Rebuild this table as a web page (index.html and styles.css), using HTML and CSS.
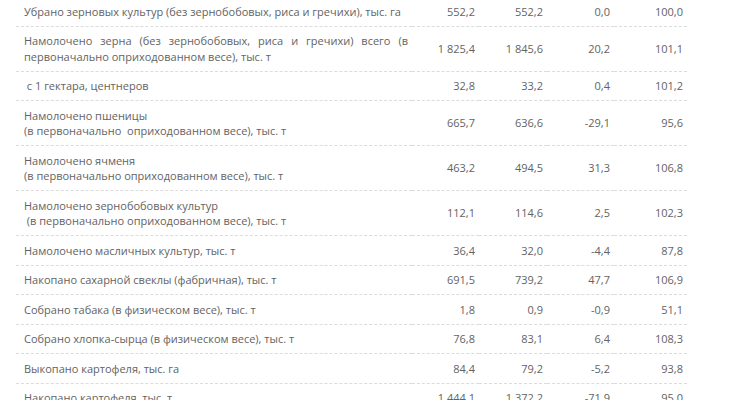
FILE: index.html
```html
<!DOCTYPE html>
<html lang="ru">
<head>
<meta charset="utf-8">
<link rel="stylesheet" href="styles.css">
</head>
<body>
<table class="stats">
  <colgroup>
    <col class="c-name"><col class="c-num"><col class="c-num2"><col class="c-num"><col class="c-last">
  </colgroup>
  <tbody>
    <tr><td class="name">Убрано зерновых культур (без зернобобовых, риса и гречихи), тыс. га</td><td>552,2</td><td>552,2</td><td>0,0</td><td>100,0</td></tr>
    <tr><td class="name">Намолочено зерна (без зернобобовых, риса и гречихи) всего (в первоначально оприходованном весе), тыс. т</td><td>1 825,4</td><td>1 845,6</td><td>20,2</td><td>101,1</td></tr>
    <tr><td class="name">&nbsp;с 1 гектара, центнеров</td><td>32,8</td><td>33,2</td><td>0,4</td><td>101,2</td></tr>
    <tr><td class="name">Намолочено пшеницы<br>(в первоначально&nbsp; оприходованном весе), тыс. т</td><td>665,7</td><td>636,6</td><td>-29,1</td><td>95,6</td></tr>
    <tr><td class="name">Намолочено ячменя<br>(в первоначально оприходованном весе), тыс. т</td><td>463,2</td><td>494,5</td><td>31,3</td><td>106,8</td></tr>
    <tr><td class="name">Намолочено зернобобовых культур<br>&nbsp;(в первоначально оприходованном весе), тыс. т</td><td>112,1</td><td>114,6</td><td>2,5</td><td>102,3</td></tr>
    <tr><td class="name">Намолочено масличных культур, тыс. т</td><td>36,4</td><td>32,0</td><td>-4,4</td><td>87,8</td></tr>
    <tr><td class="name">Накопано сахарной свеклы (фабричная), тыс. т</td><td>691,5</td><td>739,2</td><td>47,7</td><td>106,9</td></tr>
    <tr><td class="name">Собрано табака (в физическом весе), тыс. т</td><td>1,8</td><td>0,9</td><td>-0,9</td><td>51,1</td></tr>
    <tr><td class="name">Собрано хлопка-сырца (в физическом весе), тыс. т</td><td>76,8</td><td>83,1</td><td>6,4</td><td>108,3</td></tr>
    <tr><td class="name">Выкопано картофеля, тыс. га</td><td>84,4</td><td>79,2</td><td>-5,2</td><td>93,8</td></tr>
    <tr><td class="name">Накопано картофеля, тыс. т</td><td>1 444,1</td><td>1 372,2</td><td>-71,9</td><td>95,0</td></tr>
  </tbody>
</table>
</body>
</html>
```
FILE: styles.css
```css
html, body {
  margin: 0;
  padding: 0;
  background: #fff;
  overflow: hidden;
}
body {
  font-family: "Open Sans", "DejaVu Sans", sans-serif;
  font-size: 11px;
  color: #636363;
}
.stats {
  margin: -3px 0 0 16px;
  width: 671px;
  border-collapse: collapse;
  table-layout: fixed;
}
.c-name { width: 396px; }
.c-num { width: 67px; }
.c-num2 { width: 68px; }
.c-last { width: 73px; }
.stats td {
  padding: 6.5px 4px 6.5px 4px;
  line-height: 15.5px;
  text-align: right;
  vertical-align: middle;
  border-bottom: 1px dashed #dcdcdc;
  white-space: nowrap;
}
.stats td.name {
  padding-left: 8px;
  text-align: justify;
  white-space: normal;
}
```
